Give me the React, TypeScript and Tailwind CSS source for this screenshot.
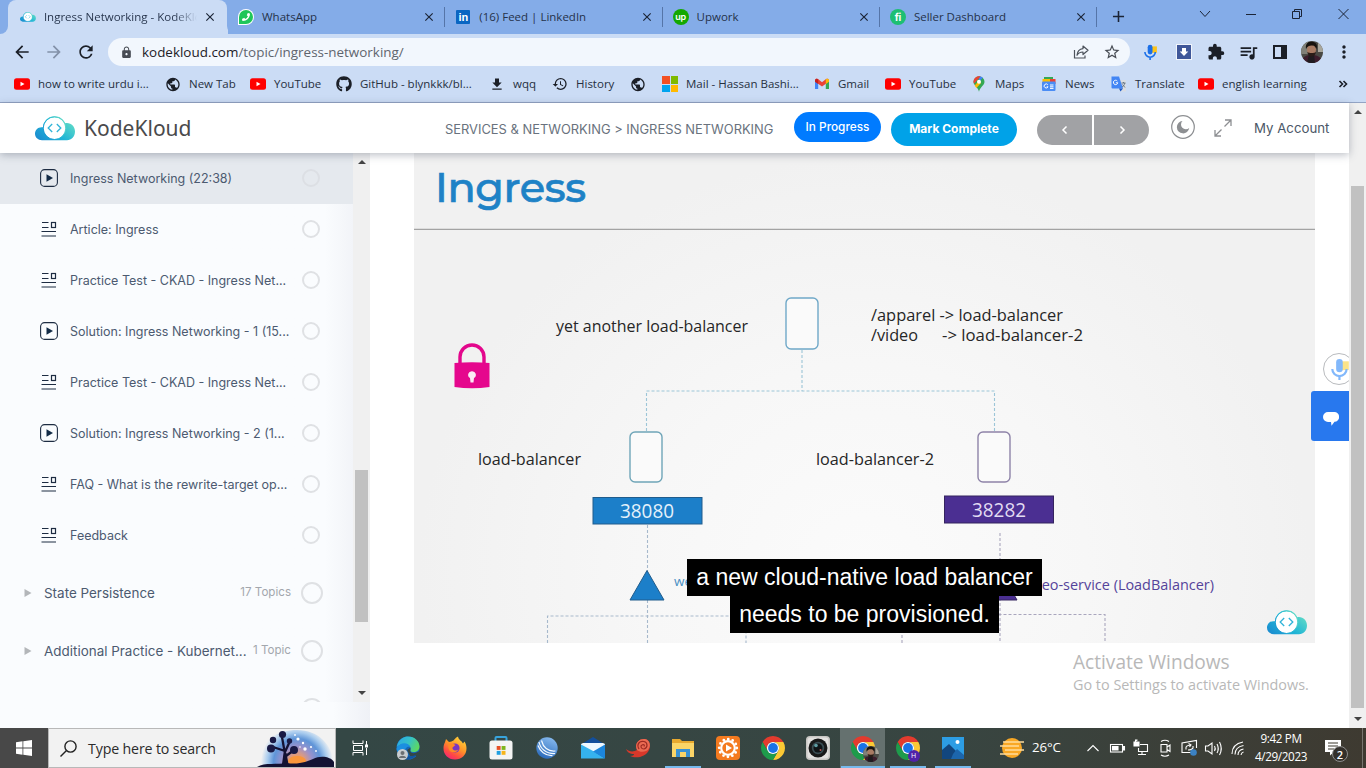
import React from "react";
import {
  MdArrowBack,
  MdArrowForward,
  MdRefresh,
  MdLock,
  MdStarBorder,
  MdExtension,
  MdQueueMusic,
  MdHistory,
  MdPublic,
  MdFileDownload,
  MdMoreVert,
  MdAdd,
  MdClose,
} from "react-icons/md";
import { FaGithub, FaPhoneAlt } from "react-icons/fa";

/* ---------- brand marks ---------- */

function CloudLogo({ className, id }: { className: string; id: string }) {
  return (
    <svg viewBox="0 0 40 25" className={className}>
      <defs>
        <linearGradient id={id} x1="0" y1="1" x2="1" y2="0.3">
          <stop offset="0" stopColor="#1a86cf" />
          <stop offset="0.5" stopColor="#1fb4d6" />
          <stop offset="1" stopColor="#62dcc6" />
        </linearGradient>
      </defs>
      <path
        d="M7 24.2C3 24.2 0 21.500 0 17.800C0 14 2.800 11.200 6.500 11.200H8C8.500 4.800 13.500 0.200 19.500 0.200C24.500 0.200 28.500 3 30.200 7.200C35.800 6.200 40 10.200 40 15.500C40 20.500 36.500 24.200 32 24.200Z"
        fill={`url(#${id})`}
      />
      <circle cx="19.500" cy="12.200" r="11" fill="#fff" />
      <circle cx="19.500" cy="12.200" r="11.300" fill="none" stroke={`url(#${id})`} strokeWidth="1" />
      <path d="M17.200 8L13.200 12L17.200 16M21.800 8L25.800 12L21.800 16" fill="none" stroke="#2fb3d8" strokeWidth="1.300" />
    </svg>
  );
}

function YouTube() {
  return (
    <svg viewBox="0 0 16 16" className="size-4">
      <rect x="0" y="2.300" width="16" height="11.400" rx="2.500" fill="#f00" />
      <path d="M6.500 5.800L10.500 8L6.500 10.200Z" fill="#fff" />
    </svg>
  );
}

function WhatsApp() {
  return (
    <span className="flex size-4 items-center justify-center rounded-full rounded-bl-sm bg-white">
      <span className="flex size-3.5 items-center justify-center rounded-full rounded-bl-[3px] bg-[#1fc659]">
        <FaPhoneAlt className="size-2 -scale-x-100 text-white" />
      </span>
    </span>
  );
}

function LinkedIn() {
  return (
    <span className="flex size-3.5 items-center justify-center rounded-[1px] bg-[#0a66c2] font-['Liberation_Sans',sans-serif] text-[11px] leading-none font-bold text-white">
      in
    </span>
  );
}

function Upwork() {
  return (
    <span className="flex size-4 items-center justify-center rounded-full bg-[#14a800] pb-0.5 font-['Inter',sans-serif] text-[9px] leading-none font-semibold tracking-tight text-white">
      up
    </span>
  );
}

function Fiverr() {
  return (
    <span className="flex size-4 items-center justify-center rounded-full bg-[#1dbf73] font-['Inter',sans-serif] text-[10px] leading-none font-bold tracking-tight text-white">
      fi
    </span>
  );
}

function Gmail() {
  return (
    <svg viewBox="0 0 16 16" className="size-4">
      <path d="M1 4.500V13H4.200V7Z" fill="#4285f4" />
      <path d="M15 4.500V13H11.800V7Z" fill="#34a853" />
      <path d="M1 4.300C1 2.800 2.800 2.200 4 3L8 6.200L12 3C13.200 2.200 15 2.800 15 4.300V5.500L8 10.600L1 5.500Z" fill="#ea4335" />
      <path d="M11.800 3.200C13 2.200 15 2.700 15 4.300V5.700L11.800 8Z" fill="#fbbc04" />
      <path d="M4.200 3.200C3 2.200 1 2.700 1 4.300V5.700L4.200 8Z" fill="#c5221f" />
    </svg>
  );
}

function Microsoft() {
  return (
    <span className="grid size-4 grid-cols-2 gap-px">
      <i className="bg-[#f25022]" />
      <i className="bg-[#7fba00]" />
      <i className="bg-[#00a4ef]" />
      <i className="bg-[#ffb900]" />
    </span>
  );
}

function MapsPin() {
  return (
    <svg viewBox="0 0 16 16" className="size-4">
      <path d="M8 0.300A5.500 5.500 0 0 1 13.500 5.800C13.500 9.500 9 11 8 15.700C7 11 2.500 9.500 2.500 5.800A5.500 5.500 0 0 1 8 0.300Z" fill="#34a853" />
      <path d="M8 5.700L11.800 1.800C10.800 0.800 9.500 0.300 8 0.300Z" fill="#4285f4" />
      <path d="M3.700 9.600L8 4.500L10 7L5.500 12Z" fill="#fbbc04" />
      <path d="M8 0.300C4.800 0.300 2.500 2.800 2.500 5.800C2.500 6.600 2.700 7.200 3 7.800L9.500 0.500C9 0.350 8.500 0.300 8 0.300Z" fill="#ea4335" />
      <circle cx="8" cy="5.700" r="2" fill="#fff" />
    </svg>
  );
}

function NewsIcon() {
  return (
    <svg viewBox="0 0 16 16" className="size-4">
      <rect x="3" y="1" width="9" height="6" fill="#34a853" />
      <rect x="1.500" y="3" width="8" height="5" fill="#fbbc04" />
      <rect x="9" y="3" width="5.500" height="5" fill="#ea4335" />
      <rect x="1" y="5.500" width="13.500" height="9.500" rx="1" fill="#4b8df5" />
      <path d="M6.800 8.800A2 2 0 1 0 7 10.800H5.700M9 9H12.500M9 10.800H12.500M9 12.400H12.500" fill="none" stroke="#fff" strokeWidth="1" />
    </svg>
  );
}

function TranslateIcon() {
  return (
    <svg viewBox="0 0 16 16" className="size-4">
      <path d="M6 4H15V15.500H9Z" fill="#d9dde3" />
      <path d="M0.500 0.500H8L12 12.500H1.500Q0.500 12.500 0.500 11.500Z" fill="#4285f4" />
      <path d="M8 12.500H12L9.500 15.500Z" fill="#1a57c5" />
      <path d="M6.300 5A2.200 2.200 0 1 0 6.800 6.800H4.800" fill="none" stroke="#fff" strokeWidth="1" />
      <path d="M10.500 7H14.500M12.500 6V7M13.800 7C13.500 9 12 10.500 11 11M11.500 8.500L14 11.500" fill="none" stroke="#5f6f80" strokeWidth="0.900" />
    </svg>
  );
}

function SpeechMic({ className, faded = false }: { className: string; faded?: boolean }) {
  const blue = faded ? "#82b8fb" : "#1a6fe8";
  return (
    <svg viewBox="0 0 16 20" className={className}>
      <rect x="9" y="3" width="7" height="8" fill={faded ? "#fbe388" : "#fcc419"} />
      <rect x="4.500" y="1" width="6" height="12" rx="3" fill={blue} />
      <path d="M1 10A6.500 6.500 0 0 0 14 10M7.500 16.500V20" fill="none" stroke={blue} strokeWidth="2" />
    </svg>
  );
}

function Chrome() {
  return (
    <svg viewBox="0 0 48 48" className="size-6">
      <path d="M24 12L44.780 12A24 24 0 0 0 3.220 12L13.600 30A12 12 0 0 1 24 12Z" fill="#e33b2e" />
      <path transform="rotate(120 24 24)" d="M24 12L44.780 12A24 24 0 0 0 3.220 12L13.600 30A12 12 0 0 1 24 12Z" fill="#fcc934" />
      <path transform="rotate(240 24 24)" d="M24 12L44.780 12A24 24 0 0 0 3.220 12L13.600 30A12 12 0 0 1 24 12Z" fill="#1e9b4b" />
      <circle cx="24" cy="24" r="12.200" fill="#fff" />
      <circle cx="24" cy="24" r="9.800" fill="#1a73e8" />
    </svg>
  );
}

function Portrait({ className, id }: { className: string; id: string }) {
  return (
    <svg viewBox="0 0 22 22" className={className}>
      <defs>
        <clipPath id={id}>
          <circle cx="11" cy="11" r="11" />
        </clipPath>
      </defs>
      <g clipPath={`url(#${id})`}>
        <rect width="22" height="22" fill="#4a4a45" />
        <rect width="7" height="13" fill="#7f8078" />
        <rect x="17" width="5" height="11" fill="#a8a69c" />
        <path d="M0 22C1 15 6 14 10 14C16 14 20 15 22 22Z" fill="#3d1d2c" />
        <path d="M6 22L8 13H13L14 22Z" fill="#1f1b20" />
        <ellipse cx="10.500" cy="8.500" rx="4.500" ry="5.800" fill="#a87b63" />
        <path d="M5 8C4 2 8 0.500 11 0.800C15 1 17 4 15.500 8C14 5 13 4.500 10.500 4.500C8 4.500 6.500 5 5 8Z" fill="#17130f" />
        <path d="M6.300 11C7 14.500 9 15.500 10.500 15.500C12.500 15.500 14.500 14 15 11C13 12.300 8.500 12.300 6.300 11Z" fill="#2a1c17" />
      </g>
    </svg>
  );
}

/* ---------- browser chrome ---------- */

const tabs = [
  { label: "WhatsApp", icon: <WhatsApp /> },
  { label: "(16) Feed | LinkedIn", icon: <LinkedIn /> },
  { label: "Upwork", icon: <Upwork /> },
  { label: "Seller Dashboard", icon: <Fiverr /> },
];

function TabStrip() {
  return (
    <div className="flex h-[34px] bg-[#84ace8] text-[11.5px] text-[#24324a]">
      <div className="flex w-2 items-end bg-[#cbdcf5]">
        <span className="h-[34px] w-2 rounded-br-lg bg-[#84ace8]" />
      </div>
      <div className="flex w-[219px] items-center rounded-t-lg bg-[#cbdcf5] pr-2.5 pl-3">
        <CloudLogo id="tabCloud" className="h-2.5 w-4" />
        <span className="ml-2 w-[154px] overflow-hidden bg-gradient-to-r from-[#24324a] from-85% to-transparent bg-clip-text whitespace-nowrap text-transparent">
          Ingress Networking - KodeKloud
        </span>
        <MdClose className="ml-1.5 size-3.5 shrink-0 text-[#1b2436]" />
      </div>
      <div className="flex w-px items-end bg-[#cbdcf5]">
        <span className="h-[34px] w-2 shrink-0 rounded-bl-lg bg-[#84ace8]" />
      </div>
      {tabs.map((t) => (
        <div key={t.label} className="flex w-[217.300px] items-center pl-2.5">
          <span className="flex w-4 justify-center">{t.icon}</span>
          <span className="ml-2 flex-1 whitespace-nowrap">{t.label}</span>
          <MdClose className="mr-2 size-3.5 text-[#1b2436]" />
          <span className="h-5 w-px bg-[#5575a8]" />
        </div>
      ))}
      <MdAdd className="mt-[7px] ml-3 size-[19px] text-[#1b2436]" />
      <svg viewBox="0 0 160 14" className="mt-[7px] ml-[68px] h-3.5 w-[160px]" fill="none" stroke="#1b2436" strokeWidth="1">
        <path d="M4 4L9 9.500L14 4" />
        <path d="M50 7.500H60" />
        <path d="M96.500 4.500H103.500V11.500H96.500ZM98.500 4.500V2.500H105.500V9.500H103.500" />
        <path d="M142.500 2L152.500 12M152.500 2L142.500 12" />
      </svg>
    </div>
  );
}

function Toolbar() {
  return (
    <div className="flex h-9 items-center bg-[#cbdcf5] pl-3 text-[#1b1f27]">
      <MdArrowBack className="size-5" />
      <MdArrowForward className="ml-3 size-5 text-[#8391a8]" />
      <MdRefresh className="ml-3 size-5" />
      <div className="ml-3 flex h-7 w-[1022px] items-center rounded-full bg-[#f2f7fd] pr-[9px] pl-3">
        <MdLock className="size-[13px] text-[#474c54]" />
        <span className="mt-px ml-[9px] flex-1 text-[13.450px] text-[#5f656e]">
          <span className="text-[#1c2027]">kodekloud.com</span>/topic/ingress-networking/
        </span>
        <svg viewBox="0 0 16 16" className="size-4" fill="none" stroke="#4c525b" strokeWidth="1.200">
          <path d="M1.500 6V14H12V11.500" />
          <path d="M10 2L15 6.300L10 10.500V8C7 8 5.200 9 4 11.300C4.300 7.500 6.500 5 10 4.600Z" strokeLinejoin="round" />
        </svg>
        <MdStarBorder className="ml-3.5 size-[18px] text-[#474c54]" />
      </div>
      <SpeechMic className="ml-[13px] h-4 w-[15px]" />
      <svg viewBox="0 0 16 16" className="ml-[18px] size-4">
        <rect width="16" height="16" fill="#f1f5fb" />
        <rect x="1" y="1" width="14" height="14" fill="#3f5799" />
        <path d="M6 4H10V7.500H12.300L8 12L3.700 7.500H6Z" fill="#fff" />
      </svg>
      <MdExtension className="ml-[15px] size-[18px]" />
      <MdQueueMusic className="ml-[13px] size-[21px]" />
      <svg viewBox="0 0 16 16" className="ml-[13px] size-4">
        <rect x="2" y="2" width="12" height="12" fill="none" stroke="#1b1f27" strokeWidth="2" />
        <rect x="9" y="2" width="5" height="12" fill="#1b1f27" />
      </svg>
      <Portrait id="account" className="ml-[13px] size-[22px]" />
      <MdMoreVert className="ml-[11px] size-5" />
    </div>
  );
}

const bookmarks = [
  { w: "w-[151px]", icon: <YouTube />, label: "how to write urdu i..." },
  { w: "w-[85px]", icon: <MdPublic className="size-[17px]" />, label: "New Tab" },
  { w: "w-[86px]", icon: <YouTube />, label: "YouTube" },
  { w: "w-[153px]", icon: <FaGithub className="size-4" />, label: "GitHub - blynkkk/bl..." },
  { w: "w-[63px]", icon: <MdFileDownload className="size-[17px]" />, label: "wqq" },
  { w: "w-[78px]", icon: <MdHistory className="size-4" />, label: "History" },
  { w: "w-8", icon: <MdPublic className="size-[17px]" />, label: "" },
  { w: "w-[152px]", icon: <Microsoft />, label: "Mail - Hassan Bashi..." },
  { w: "w-[71px]", icon: <Gmail />, label: "Gmail" },
  { w: "w-[86px]", icon: <YouTube />, label: "YouTube" },
  { w: "w-[70px]", icon: <MapsPin />, label: "Maps" },
  { w: "w-[70px]", icon: <NewsIcon />, label: "News" },
  { w: "w-[87px]", icon: <TranslateIcon />, label: "Translate" },
  { w: "w-[140px]", icon: <YouTube />, label: "english learning" },
];

function Bookmarks() {
  return (
    <div className="flex h-[33px] items-center border-b border-[#93a4c4] bg-[#cbdcf5] pb-1 pl-3.5 text-[11.5px] text-[#26303f]">
      {bookmarks.map((b, i) => (
        <div key={i} className={`flex shrink-0 items-center ${b.w}`}>
          <span className="flex w-4 justify-center text-[#1b1f27]">{b.icon}</span>
          <span className="ml-2 whitespace-nowrap">{b.label}</span>
        </div>
      ))}
      <svg viewBox="0 0 10 8" className="h-2 w-2.5" fill="none" stroke="#1b1f27" strokeWidth="1.600">
        <path d="M1.500 1L4.500 4L1.500 7M5.500 1L8.500 4L5.500 7" />
      </svg>
    </div>
  );
}

/* ---------- course site ---------- */

function SiteHeader() {
  return (
    <header className="relative z-10 flex h-[50px] w-[1349px] bg-white pl-[35px] font-['Inter',sans-serif] shadow-[0_2px_8px_rgba(60,70,90,0.35)]">
      <CloudLogo id="headCloud" className="mt-[13px] h-[25px] w-10" />
      <span className="mt-[11px] ml-[9px] w-[119px] font-['Noto_Sans',sans-serif] text-[21px] leading-7 font-normal text-[#4a4a4c]">
        KodeKloud
      </span>
      <span className="mt-[17px] ml-[242px] w-[349px] text-[12.900px] leading-5 whitespace-nowrap text-[#69727d]">
        SERVICES &amp; NETWORKING &gt; INGRESS NETWORKING
      </span>
      <span className="mt-[9px] flex h-[30px] w-[87px] items-center justify-center rounded-full bg-[#007bff] pt-px text-[11.800px] font-medium text-white">
        In Progress
      </span>
      <span className="mt-2.5 ml-2.5 flex h-[33px] w-[126px] items-center justify-center rounded-full bg-[#00a2e8] pb-px text-[12px] font-bold text-white">
        Mark Complete
      </span>
      <div className="mt-3 ml-5 flex h-[30px] w-28 gap-0.5 overflow-hidden rounded-full">
        <span className="flex flex-1 items-center justify-center bg-[#a1a2a5]">
          <svg viewBox="0 0 8 8" className="size-2" fill="none" stroke="#fff" strokeWidth="1.500">
            <path d="M5.500 0.500L2 4L5.500 7.500" />
          </svg>
        </span>
        <span className="flex flex-1 items-center justify-center bg-[#a1a2a5]">
          <svg viewBox="0 0 8 8" className="size-2" fill="none" stroke="#fff" strokeWidth="1.500">
            <path d="M2.500 0.500L6 4L2.500 7.500" />
          </svg>
        </span>
      </div>
      <svg viewBox="0 0 24 24" className="mt-3 ml-[22px] size-6">
        <circle cx="12" cy="12" r="11.300" fill="none" stroke="#8d8f92" strokeWidth="1.200" />
        <path d="M11.500 6A6.200 6.200 0 1 0 18.200 13A4.300 4.300 0 0 1 11.500 6Z" fill="#8d8f92" />
      </svg>
      <svg viewBox="0 0 18 18" className="mt-4 ml-[19px] size-[18px]" fill="none" stroke="#8d8f92" strokeWidth="1.300">
        <path d="M10.500 7.500L17 1M11 1H17V7M7.500 10.500L1 17M1 11V17H7" />
      </svg>
      <span className="mt-[15px] ml-[22px] text-[13.250px] leading-5 whitespace-nowrap text-[#4b5767]">My Account</span>
    </header>
  );
}

function PlayIcon() {
  return (
    <svg viewBox="0 0 18 18" className="mb-px size-[18px]">
      <rect x="0.600" y="0.600" width="16.800" height="16.800" rx="4" fill="none" stroke="#1d2c42" strokeWidth="1.100" />
      <path d="M6.500 5.200L13 9L6.500 12.800Z" fill="#122b46" />
    </svg>
  );
}

function ArticleIcon() {
  return (
    <svg viewBox="0 0 18 18" className="mb-px size-[18px]" fill="none" stroke="#1d2c42" strokeWidth="1.200">
      <path d="M2 2.500H8.500M2 7.500H8.500M1.500 11.500H16M1.500 16H16" />
      <rect x="11.500" y="2.500" width="4" height="5" />
    </svg>
  );
}

const lessons = [
  { play: true, label: "Ingress Networking (22:38)", active: true },
  { play: false, label: "Article: Ingress" },
  { play: false, label: "Practice Test - CKAD - Ingress Net..." },
  { play: true, label: "Solution: Ingress Networking - 1 (15..." },
  { play: false, label: "Practice Test - CKAD - Ingress Net..." },
  { play: true, label: "Solution: Ingress Networking - 2 (1..." },
  { play: false, label: "FAQ - What is the rewrite-target op..." },
  { play: false, label: "Feedback" },
];

const sections = [
  { label: "State Persistence", count: "17 Topics" },
  { label: "Additional Practice - Kubernet...", count: "1 Topic" },
];

function Sidebar() {
  return (
    <aside className="flex h-[575px] w-[370px] flex-col bg-[#fafcfe] font-['Inter',sans-serif]">
      <div className="flex h-[549px]">
        <div className="w-[353px] overflow-hidden bg-gradient-to-r from-[#fafcfe] from-92% to-[#f2f4f8]">
          {lessons.map((l, i) => (
            <div key={i} className={`flex h-[51px] items-center pl-10 ${l.active ? "bg-[#e5e9ee]" : ""}`}>
              {l.play ? <PlayIcon /> : <ArticleIcon />}
              <span className="mt-0.5 ml-3 w-[232px] text-[12.500px] whitespace-nowrap text-[#4c5a70]">{l.label}</span>
              <span className={`mb-px size-[18px] rounded-full border-2 ${l.active ? "border-[#dcdfe4]" : "border-[#dfe1e4]"}`} />
            </div>
          ))}
          <div className="pt-[3px]">
            {sections.map((s) => (
              <div key={s.label} className="flex h-[58px] items-center pl-6">
                <svg viewBox="0 0 8 8" className="size-2 shrink-0">
                  <path d="M0.500 0L7.500 4L0.500 8Z" fill="#b3b6b9" />
                </svg>
                <span className="ml-3 flex-1 text-[13.450px] whitespace-nowrap text-[#4c5a70]">{s.label}</span>
                <span className="mr-2.5 text-[11.600px] whitespace-nowrap text-[#a3a7ad]">{s.count}</span>
                <span className="mr-[30px] size-[22px] shrink-0 rounded-full border-2 border-[#dfe1e4]" />
              </div>
            ))}
            <div className="flex h-[58px] items-center justify-end pr-[30px]">
              <span className="size-[22px] rounded-full border-2 border-[#dfe1e4]" />
            </div>
          </div>
        </div>
        <div className="flex w-[17px] flex-col items-center bg-[#f0f0f0] pt-[7px] pb-[7px]">
          <svg viewBox="0 0 8 4" className="h-1 w-2"><path d="M0 4L4 0L8 4Z" fill="#444" /></svg>
          <span className="mt-[306px] h-[152px] w-[13px] bg-[#c1c1c1]" />
          <svg viewBox="0 0 8 4" className="mt-auto h-1 w-2"><path d="M0 0L4 4L8 0Z" fill="#444" /></svg>
        </div>
      </div>
      <div className="flex-1 bg-gradient-to-r from-[#fafcfe] from-90% to-[#eff1f6]" />
    </aside>
  );
}

function Slide() {
  return (
    <div className="relative h-[490px] w-[901px] bg-[radial-gradient(ellipse_at_50%_85%,#fbfbfb_0%,#f7f7f7_35%,#f1f1f1_70%)]">
      <svg viewBox="414 153 901 490" className="h-[490px] w-[901px] font-['Open_Sans',sans-serif]">
        <text x="435" y="201.500" textLength="151" fontSize="41.500" fontWeight="500" fill="#1e82c6" stroke="#1e82c6" strokeWidth="0.700" className="font-['Montserrat','Lato',sans-serif]">Ingress</text>
        <path d="M414 229.300H1315" stroke="#a3a3a3" strokeWidth="1.300" />
        <g fontSize="16" fill="#262626">
          <text x="556" y="332" textLength="192" lengthAdjust="spacingAndGlyphs">yet another load-balancer</text>
          <text x="871" y="321" textLength="192" lengthAdjust="spacingAndGlyphs">/apparel -&gt; load-balancer</text>
          <text x="871" y="341" textLength="47" lengthAdjust="spacingAndGlyphs">/video</text>
          <text x="942" y="341" textLength="141" lengthAdjust="spacingAndGlyphs">-&gt; load-balancer-2</text>
          <text x="478" y="464.500" textLength="103" lengthAdjust="spacingAndGlyphs">load-balancer</text>
          <text x="816" y="464.500" textLength="118" lengthAdjust="spacingAndGlyphs">load-balancer-2</text>
        </g>
        <g fill="none" stroke="#9cc5d8" strokeWidth="1.100" strokeDasharray="3 2">
          <path d="M802 350V391M646.500 431V391H994.500V431" />
          <path d="M647.500 525V643M547.500 643V616H746V643" stroke="#a7b9cc" />
          <path d="M1000 533V643M902 643V614.500H1105V643" stroke="#a9a6bd" />
        </g>
        <g fill="#fafafa" strokeWidth="1.400">
          <rect x="786" y="298" width="32" height="51" rx="5" stroke="#6fa8c8" />
          <rect x="630" y="432" width="32" height="50" rx="5" stroke="#6fa5b8" />
          <rect x="978" y="432" width="32" height="50" rx="5" stroke="#8e83a8" />
        </g>
        <rect x="593" y="497.500" width="109" height="26.500" fill="#1c7fc9" stroke="#205c8c" />
        <rect x="944.500" y="496" width="109" height="27" fill="#4b2f92" stroke="#35245f" />
        <g fontSize="19.500" fill="#e3f1fb">
          <text x="620" y="518" textLength="54" lengthAdjust="spacingAndGlyphs">38080</text>
          <text x="972" y="517" textLength="54" lengthAdjust="spacingAndGlyphs" fill="#e2dcf2">38282</text>
        </g>
        <path d="M647 570.500L664 600H630Z" fill="#1c7fc9" stroke="#205c8c" />
        <path d="M1000 570.500L1017 600H983Z" fill="#4b2f92" stroke="#35245f" />
        <text x="674" y="586" fontSize="13.500" fill="#4a90c4">wear-service</text>
        <text x="1022" y="589.500" textLength="192" lengthAdjust="spacingAndGlyphs" fontSize="14" fill="#54439a">video-service (LoadBalancer)</text>
        <path d="M460 364V357A12 12 0 0 1 484 357V364" fill="none" stroke="#e3078c" strokeWidth="3.400" />
        <path d="M454.500 363Q472 361.500 489.500 363V387Q472 389.500 454.500 387Z" fill="#e5078d" />
        <path d="M472 371.200A3.700 3.700 0 0 1 474 378.100L473.500 382.500H470.500L470 378.100A3.700 3.700 0 0 1 472 371.200Z" fill="#fbe9f4" />
      </svg>
      <div className="absolute top-[457px] left-[853px]">
        <CloudLogo id="slideCloud" className="h-[25px] w-10" />
      </div>
      <div className="absolute top-[406px] left-[273px] flex w-[355px] flex-col items-center font-['Liberation_Sans',Arial,sans-serif] text-[23px] leading-[37px] whitespace-nowrap text-white">
        <span className="h-[37px] w-[355px] bg-black text-center leading-9">a new cloud-native load balancer</span>
        <span className="h-[37px] w-[269px] bg-black text-center leading-9">needs to be provisioned.</span>
      </div>
    </div>
  );
}

function Site() {
  return (
    <div className="flex h-[625px]">
      <div className="w-[1349px]">
        <SiteHeader />
        <div className="flex h-[575px]">
          <Sidebar />
          <main className="relative w-[979px] overflow-hidden bg-white pl-11">
            <Slide />
            <div className="mt-1.5 ml-[659px] font-['Open_Sans',sans-serif] whitespace-nowrap text-[#b8b8b8]">
              <p className="text-[19.100px] leading-[26px]">Activate Windows</p>
              <p className="text-[14.400px] leading-5">Go to Settings to activate Windows.</p>
            </div>
            <span className="absolute top-50 left-[953px] flex size-8 items-center justify-center rounded-full border border-[#b9bbbe] bg-white">
              <SpeechMic className="ml-0.5 h-[22px] w-[18px]" faded />
            </span>
            <span className="absolute top-[238px] right-0 flex h-[50px] w-[38px] items-center justify-center rounded-l-[3px] bg-[#2878ee] pt-1.5 pl-0.5">
              <svg viewBox="0 0 16 14" className="h-3.5 w-4">
                <path d="M5 0H11A4.800 4.800 0 0 1 11.500 9.800L8.500 13.800L8 10H5A5 5 0 0 1 5 0Z" fill="#fff" />
              </svg>
            </span>
          </main>
        </div>
      </div>
      <div className="flex w-[17px] flex-col items-center bg-[#f0f0f0] pt-[7px] pb-[7px]">
        <svg viewBox="0 0 8 4" className="h-1 w-2"><path d="M0 4L4 0L8 4Z" fill="#444" /></svg>
        <span className="mt-[72px] h-[522px] w-[13px] bg-[#c1c1c1]" />
        <svg viewBox="0 0 8 4" className="mt-auto h-1 w-2"><path d="M0 0L4 4L8 0Z" fill="#444" /></svg>
      </div>
    </div>
  );
}

/* ---------- taskbar ---------- */

function SearchArt() {
  return (
    <svg viewBox="0 0 80 38" className="h-[38px] w-20">
      <defs>
        <radialGradient id="sky" gradientUnits="userSpaceOnUse" cx="42" cy="33" r="36">
          <stop offset="0" stopColor="#f79a45" />
          <stop offset="0.22" stopColor="#dd9a80" />
          <stop offset="0.42" stopColor="#9a92cc" />
          <stop offset="0.65" stopColor="#5f95d8" />
          <stop offset="0.82" stopColor="#a8cbee" />
          <stop offset="1" stopColor="#f2f2f2" />
        </radialGradient>
      </defs>
      <path d="M4 38C4 10 22 1 42 1C65 1 79 18 79 38Z" fill="url(#sky)" />
      <ellipse cx="42" cy="32" rx="9" ry="5" fill="#f9963c" />
      <path d="M2 38C10 33 22 36 32 34C45 36 52 32 58 30C66 26 76 28 79 33V38Z" fill="#141233" />
      <path d="M28 36L30 22L18 18M30 25L27 8M30 23L35 12M31 27L39 21" fill="none" stroke="#141233" strokeWidth="2.300" />
      <path d="M27.500 38L29 24H31.500L34 38Z" fill="#141233" />
      <g fill="#191a45">
        <circle cx="18" cy="11" r="3.200" />
        <circle cx="27.500" cy="5.500" r="3.600" />
        <circle cx="16" cy="19.500" r="4" />
        <circle cx="34.500" cy="12" r="2.700" />
        <circle cx="39" cy="21" r="4" />
      </g>
      <g fill="#fff">
        <circle cx="43" cy="10" r="1.600" />
        <circle cx="48" cy="14" r="1.200" />
        <circle cx="50" cy="20" r="1.700" />
        <circle cx="56" cy="18" r="1.100" />
        <circle cx="40" cy="6" r="0.900" />
        <circle cx="61" cy="22" r="0.900" />
        <circle cx="45" cy="18" r="0.800" />
      </g>
    </svg>
  );
}

const taskApps: { w: string; icon: React.ReactNode; line?: string; active?: boolean }[] = [
  {
    w: "w-12",
    icon: (
      <svg viewBox="0 0 16 16" className="size-4" fill="none" stroke="#fff" strokeWidth="1">
        <path d="M1 0.500V3.500H11V0.500M1 15.500V12.500H11V15.500M1.500 5.500H10.500V10.500H1.500ZM14.500 1V5M14.500 8V15" />
        <rect x="13.500" y="5" width="2" height="2" fill="#fff" />
      </svg>
    ),
  },
  {
    w: "w-12",
    icon: (
      <svg viewBox="0 0 24 24" className="size-6">
        <defs>
          <linearGradient id="edgeWave" x1="0" y1="0.2" x2="1" y2="0.6">
            <stop offset="0" stopColor="#2aa8e4" />
            <stop offset="0.5" stopColor="#35c1c9" />
            <stop offset="1" stopColor="#5fd95c" />
          </linearGradient>
        </defs>
        <circle cx="12" cy="12" r="11.500" fill="#1668b8" />
        <path d="M0.800 11C2 3 8 0.500 12 0.500C19 0.500 23.500 5.500 23.500 10.500C23.500 14.500 20 16.500 17 16C13 15.500 15 14 14.500 11.500C13.500 8 6 6 0.800 11Z" fill="url(#edgeWave)" />
        <path d="M0.600 12C4 5.500 13 6 14.500 11.500C12 9.500 8 12 9 18C4 18 0 16 0.600 12Z" fill="#1b8fe0" />
        <path d="M14.300 11.800C14.800 14 13.500 15 15 16.500C17 18 21 17 22.500 15L24 20H14L11 14Z" fill="#344745" />
        <path d="M9 13C7.500 19 13 22.500 20.500 18.500C17 24.500 7 25 3 18Z" fill="#12559f" />
        <circle cx="6.500" cy="18.500" r="5.500" fill="#c9cdd0" />
        <circle cx="6.500" cy="17" r="2" fill="#6c7073" />
        <path d="M2.800 22C3.500 19 9.500 19 10.200 22Z" fill="#6c7073" />
      </svg>
    ),
  },
  {
    w: "w-[46px]",
    icon: (
      <svg viewBox="0 0 24 24" className="size-6">
        <defs>
          <linearGradient id="fox" x1="0.8" y1="0" x2="0.2" y2="1">
            <stop offset="0" stopColor="#ffd83c" />
            <stop offset="0.45" stopColor="#ff9428" />
            <stop offset="0.75" stopColor="#ff4a44" />
            <stop offset="1" stopColor="#f4207c" />
          </linearGradient>
        </defs>
        <path d="M12 23.500C5 23.500 0.500 18.500 0.500 12.500C0.500 8 2.500 6 3 3L6 6C8 5.500 9 5.500 10.500 4.500C13 1.500 14 1 15 0.500C15.500 4 19 5 20 7.500L21.500 5.500C23 8 23.500 10 23.500 12.500C23.500 19 18.500 23.500 12 23.500Z" fill="url(#fox)" />
        <circle cx="12" cy="12" r="4.600" fill="#7a35c2" />
        <path d="M5 8C8 7 11 7.500 12.500 9L9.500 11.500C9 14 12 15.500 15.500 13.500C13 18 6 17 5.500 12Z" fill="#ff8a26" />
      </svg>
    ),
  },
  {
    w: "w-[45px]",
    icon: (
      <svg viewBox="0 0 24 24" className="size-6">
        <path d="M6.500 6V2Q6.500 1 7.500 1H16.500Q17.500 1 17.500 2V6" fill="none" stroke="#38a4dc" strokeWidth="2" />
        <rect x="0.500" y="4.500" width="23" height="19" rx="2.500" fill="#f4f4f4" />
        <path d="M7.700 10H11.600V13.900H7.700Z" fill="#e74f26" />
        <path d="M12.600 10H16.500V13.900H12.600Z" fill="#7eb51d" />
        <path d="M7.700 14.900H11.600V18.800H7.700Z" fill="#209fe1" />
        <path d="M12.600 14.900H16.500V18.800H12.600Z" fill="#f7b51b" />
      </svg>
    ),
  },
  {
    w: "w-[47px]",
    icon: (
      <svg viewBox="0 0 22 22" className="size-[22px]">
        <defs>
          <linearGradient id="orb" x1="0.7" y1="0" x2="0.3" y2="1">
            <stop offset="0" stopColor="#86b9ee" />
            <stop offset="1" stopColor="#2868b9" />
          </linearGradient>
        </defs>
        <circle cx="11" cy="11" r="10.700" fill="url(#orb)" />
        <path d="M3 5C4 11 10 17 19 16.500M5.500 3.500C7 10 12 15 19.500 14M2 8.500C4 14 9 19 16.500 18.500" fill="none" stroke="#f4faff" strokeWidth="1.200" />
      </svg>
    ),
  },
  {
    w: "w-[45px]",
    icon: (
      <svg viewBox="0 0 24 24" className="size-6">
        <path d="M0 8.500L12 1L24 8.500V22H0Z" fill="#134f9c" />
        <path d="M2 7H22L24 8V14L12 18L0 14V8Z" fill="#eef8ff" />
        <path d="M0 8.500L13 15.500L24 22.500H0Z" fill="#35b2ee" />
        <path d="M24 8.500L12 15.500L24 22.500Z" fill="#1c86dc" />
      </svg>
    ),
  },
  {
    w: "w-[45px]",
    icon: (
      <svg viewBox="0 0 24 22" className="h-[22px] w-6">
        <path d="M0 12C3 15 8 15 11 13C8 7 13 1 19 2C24 3 25 9 23 13C20 20 10 22 4 19C7 19 8 18 8 17C4 17 1 15 0 12Z" fill="#d8382a" />
        <path d="M11 13C8 7 13 1 19 2C24 3 25 9 22.500 12C21 15 14 16 11 13Z" fill="#ea6a52" />
        <path d="M13 12C10 7 14 3.500 18 4.500C22 5.500 22 11 18 12C15 12 14 9 16 8C17.500 7 19 8 18 9.500" fill="none" stroke="#9c2a22" strokeWidth="1.200" />
      </svg>
    ),
  },
  {
    w: "w-[45px]",
    line: "w-[36px]",
    icon: (
      <svg viewBox="0 0 22 20" className="h-5 w-[22px]">
        <path d="M0 1H8L10 3H22V19H0Z" fill="#e8a92f" />
        <path d="M0 5H22V19H0Z" fill="#fbd567" />
        <path d="M4 11H18V19H14V14H8V19H4Z" fill="#3a92d4" />
      </svg>
    ),
  },
  {
    w: "w-[45px]",
    icon: (
      <svg viewBox="0 0 24 24" className="size-6">
        <rect width="24" height="24" rx="4" fill="#f47a1f" />
        <circle cx="12" cy="12" r="8.800" fill="none" stroke="#fff" strokeWidth="2.800" strokeDasharray="0 4.608" strokeLinecap="round" />
        <circle cx="12" cy="12" r="6.800" fill="none" stroke="#fff" strokeWidth="2.200" />
        <path d="M10 8.500L16 12L10 15.500Z" fill="#fff" />
      </svg>
    ),
  },
  { w: "w-[45px]", icon: <Chrome /> },
  {
    w: "w-[45px]",
    icon: (
      <svg viewBox="0 0 24 24" className="size-6">
        <rect width="24" height="24" rx="4" fill="#c9c7c4" />
        <rect x="1.500" y="1.500" width="21" height="21" rx="3" fill="#e4e2e0" />
        <circle cx="12" cy="12" r="9.500" fill="#191919" />
        <circle cx="12" cy="12" r="6.200" fill="#3a4c52" />
        <circle cx="12" cy="12" r="4.500" fill="#101416" />
        <circle cx="10" cy="9.500" r="1.800" fill="#5f9da4" />
        <circle cx="14.500" cy="14" r="1" fill="#b55" />
      </svg>
    ),
  },
  {
    w: "w-[45px]",
    active: true,
    line: "w-[44px]",
    icon: (
      <span className="relative">
        <Chrome />
        <span className="absolute -right-1 -bottom-0.5">
          <Portrait id="badge" className="size-4" />
        </span>
      </span>
    ),
  },
  {
    w: "w-[45px]",
    line: "w-[36px]",
    icon: (
      <span className="relative">
        <Chrome />
        <span className="absolute right-0 -bottom-0.5 flex size-3 items-center justify-center rounded-full bg-[#5122a8] text-[7px] text-white">H</span>
      </span>
    ),
  },
  {
    w: "w-[45px]",
    line: "w-[36px]",
    icon: (
      <svg viewBox="0 0 22 22" className="size-[22px]">
        <rect width="22" height="22" fill="#2d9de4" />
        <path d="M0 13L7 7L22 22H0Z" fill="#12467e" />
        <path d="M11 17L15 12L22 18V22H9Z" fill="#1c66ad" />
        <circle cx="15.500" cy="5" r="2" fill="#fff" />
      </svg>
    ),
  },
];

function Taskbar() {
  return (
    <div className="flex h-10 bg-gradient-to-r from-[#344745] from-25% via-[#384541] via-70% to-[#3e3a31] text-white">
      <div className="flex w-12 items-center justify-center bg-[#484848]">
        <svg viewBox="0 0 16 16" className="size-4" fill="#fff">
          <path d="M0 2.200L6.500 1.300V7.600H0ZM7.300 1.200L16 0V7.600H7.300ZM0 8.400H6.500V14.700L0 13.800ZM7.300 8.400H16V16L7.300 14.800Z" />
        </svg>
      </div>
      <div className="flex w-[288px] items-center border border-[#b8b8b8] bg-[#f2f2f2] pl-[11px] text-[#2b2b2b]">
        <svg viewBox="0 0 17 17" className="size-[17px]" fill="none" stroke="#222" strokeWidth="1.400">
          <circle cx="10.500" cy="6.500" r="5.600" />
          <path d="M6.500 10.500L0.500 16.500" />
        </svg>
        <span className="mt-px ml-[11px] flex-1 text-[14.200px] tracking-[-0.010em]">Type here to search</span>
        <SearchArt />
      </div>
      {taskApps.map((a, i) => (
        <div key={i} className={`flex shrink-0 flex-col items-center ${a.w} ${a.active ? "bg-[#65716f]" : ""}`}>
          <span className="flex flex-1 items-center">{a.icon}</span>
          <span className={`-mt-0.5 h-0.5 bg-[#76b9ed] ${a.line ?? "w-0"}`} />
        </div>
      ))}
      <div className="ml-[25px] flex w-[84px] items-center">
        <svg viewBox="0 0 24 22" className="h-[22px] w-6">
          <circle cx="12" cy="11" r="10" fill="#f9a825" />
          <path d="M3 5H24M0 9H19M5 13H24M0 17H18" stroke="#ffdc9a" strokeWidth="1.700" />
        </svg>
        <span className="ml-2 text-[13.300px] tracking-[-0.010em]">26°C</span>
      </div>
      <svg viewBox="1084 736 164 24" className="mt-2 h-6 w-[164px]" fill="none" stroke="#fff" strokeWidth="1.100">
        <path d="M1087.500 751L1093 745.500L1098.500 751" />
        <rect x="1110.500" y="744.500" width="12" height="7.500" />
        <path d="M1112.500 746.500H1118V750H1112.500ZM1123 746.500H1124.500V750H1123" fill="#fff" />
        <path d="M1140 744.500H1147.500V751.500H1138.500V748M1142 752V754.500M1138 754.500H1146" />
        <path d="M1134 742H1139V746H1134ZM1135.500 742V740H1137.500" fill="#fff" />
        <path d="M1161 741.500Q1165 739 1169 741.500M1161 755Q1165 757.500 1169 755M1161 744.500H1167V752H1161ZM1167 747L1170 745V751.500L1167 749.500" />
        <path d="M1191 752.500H1182V743L1196.500 740.500V748M1186 749.500V747.500Q1186 745.500 1191 745M1188.500 743.500L1191 745L1189.500 747M1193 746V748Q1192 750 1188 750" />
        <circle cx="1193.500" cy="752.500" r="3.300" fill="#3b82c4" stroke="none" />
        <path d="M1205.500 746V751H1208L1212 754V743L1208 746ZM1214.500 746Q1216 748.500 1214.500 751M1217 744Q1219.500 748.500 1217 753M1219.500 742Q1223 748.500 1219.500 755" />
        <path d="M1232 754Q1232 744 1243 742M1235 754.500Q1235 747 1243.500 745.500M1238 755Q1238 750 1243.500 749M1241 755Q1241.500 752.500 1243.500 752" />
      </svg>
      <div className="flex w-[66px] flex-col items-center text-[11.700px] leading-[18px] tracking-[-0.030em] whitespace-nowrap">
        <span className="mt-px">9:42 PM</span>
        <span>4/29/2023</span>
      </div>
      <div className="relative mt-3 ml-[11px] w-[37px]">
        <svg viewBox="0 0 16 16" className="size-4">
          <path d="M0 0H16V12H9L5 15.500V12H0Z" fill="#fff" />
          <path d="M3 3H13M3 6H13M3 9H9" stroke="#3e3a31" strokeWidth="1.200" />
        </svg>
        <span className="absolute top-1.5 left-[7px] flex size-4 items-center justify-center rounded-full border border-[#8d8d8d] bg-[#33302b] text-[11px] leading-none font-semibold">2</span>
      </div>
      <span className="h-10 w-px bg-[#77756f]" />
    </div>
  );
}

export default function App() {
  return (
    <div className="h-[768px] w-[1366px] overflow-hidden bg-white font-['Open_Sans','Noto_Sans',sans-serif]">
      <TabStrip />
      <Toolbar />
      <Bookmarks />
      <Site />
      <Taskbar />
    </div>
  );
}
